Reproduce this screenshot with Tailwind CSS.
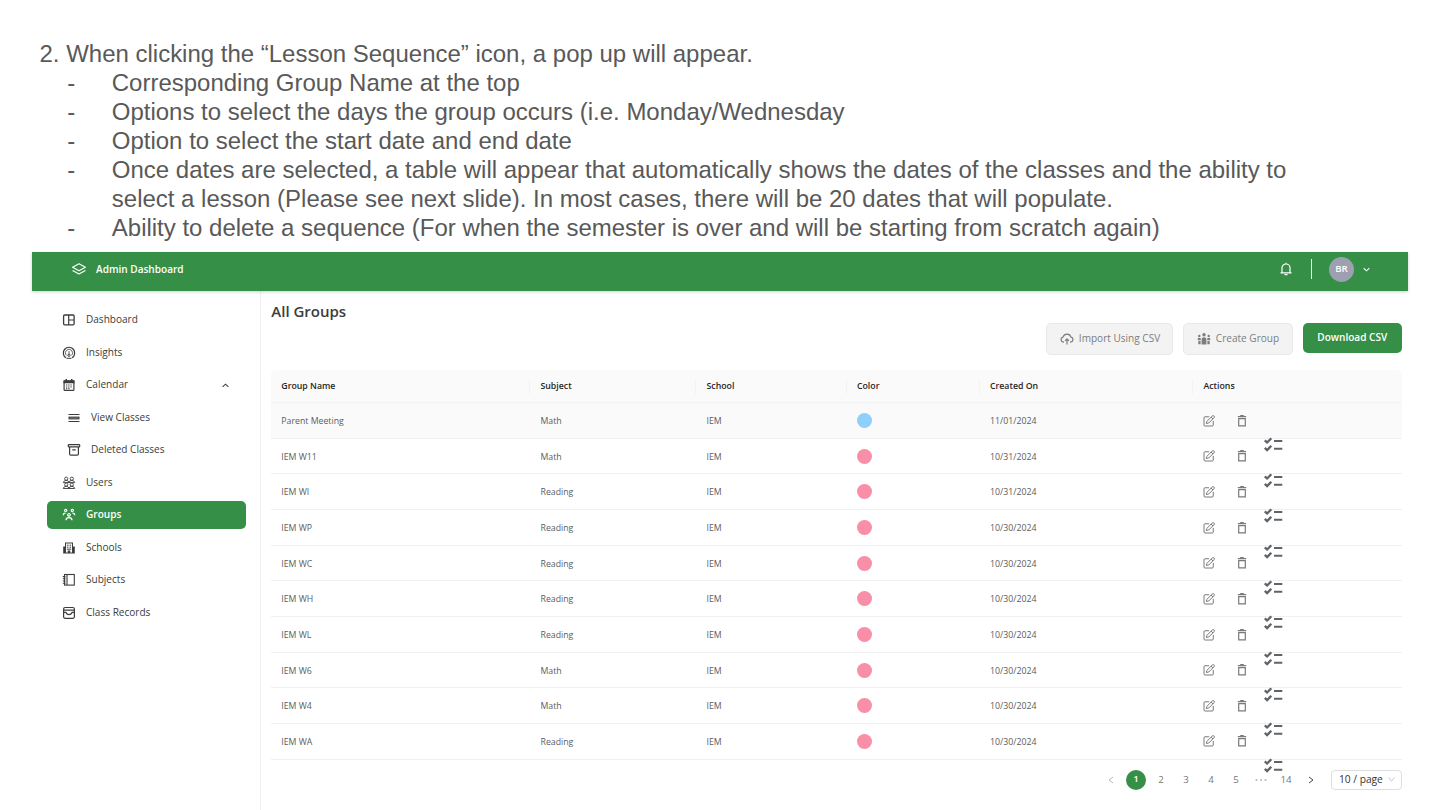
<!DOCTYPE html>
<html lang="en">
<head>
<meta charset="utf-8">
<title>All Groups</title>
<script src="https://cdn.jsdelivr.net/npm/@tailwindcss/browser@4"></script>
</head>
<body class="w-[1440px] h-[810px] overflow-hidden bg-white font-['Open_Sans',sans-serif] text-[#3c3c3c]">
<svg class="hidden">
  <symbol id="edit" viewBox="0 0 24 24"><g fill="none" stroke="currentColor" stroke-width="2" stroke-linejoin="round" stroke-linecap="round"><path d="M11.500 3.500H4a2 2 0 0 0-2 2v14.500a2 2 0 0 0 2 2h14.500a2 2 0 0 0 2-2v-7.500"/><path d="M8 12.500 18.500 2a2 2 0 0 1 3.500 3.500l-10.500 10.500-4 .8z"/><path d="m16.500 4.500 3 3"/></g></symbol>
  <symbol id="trash" viewBox="0 0 12 14"><path fill="none" stroke="currentColor" stroke-width="1.200" d="M1.800 2.600h8.400M4.200 1.700h3.600M2.700 4.600h6.600v7.200H2.700z"/></symbol>
  <symbol id="checks" viewBox="0 0 19 15"><g fill="none" stroke="#606368" stroke-width="2.300"><path d="m.8 3.300 2.300 2.200 4.200-4.300M.8 10.900l2.300 2.200 4.200-4.300"/><path stroke-width="1.900" d="M10 4h8.300M10 11.800h8.300"/></g></symbol>
</svg>
<div class="flex flex-col h-full pl-8 pr-8">
  <section class="h-[252px] shrink-0 pt-[40.450px] pl-[7.500px] font-['Liberation_Sans',sans-serif] text-[23.990px] leading-[28.850px] text-[#595959] whitespace-nowrap">
    <p>2. When clicking the “Lesson Sequence” icon, a pop up will appear.</p>
    <ul class="pl-[27.800px]">
      <li class="flex"><span class="w-[44.500px]">-</span><span>Corresponding Group Name at the top</span></li>
      <li class="flex"><span class="w-[44.500px]">-</span><span>Options to select the days the group occurs (i.e. Monday/Wednesday</span></li>
      <li class="flex"><span class="w-[44.500px]">-</span><span>Option to select the start date and end date</span></li>
      <li class="flex"><span class="w-[44.500px]">-</span><span>Once dates are selected, a table will appear that automatically shows the dates of the classes and the ability to<br>select a lesson (Please see next slide). In most cases, there will be 20 dates that will populate.</span></li>
      <li class="flex"><span class="w-[44.500px]">-</span><span>Ability to delete a sequence (For when the semester is over and will be starting from scratch again)</span></li>
    </ul>
  </section>

  <header class="relative z-10 flex h-[38.500px] shrink-0 items-center bg-[#368f46] pl-[40px] pr-[38px] pb-[4.500px] text-white shadow-[0_1px_3px_rgba(0,0,0,0.2)]">
    <svg class="mr-[10px] h-[14px] w-[14px]" viewBox="0 0 24 24" fill="none" stroke="currentColor" stroke-width="2" stroke-linejoin="round"><path d="M12 3 23 9 12 15 1 9z"/><path d="M1 14.500 12 20.500l11-6"/></svg>
    <span class="pt-px text-[10.050px] font-semibold">Admin Dashboard</span>
    <svg class="ml-auto h-[15px] w-[14px]" viewBox="0 0 14 15" fill="none" stroke="currentColor" stroke-width="1.200" stroke-linejoin="round"><path d="M1.500 10.800h11M3 10.500V6a4 4 0 0 1 8 0v4.500M7 2V.7M5.500 12.700h3"/></svg>
    <span class="ml-[18px] h-[20px] w-px bg-white/90"></span>
    <span class="ml-[17px] flex h-[25px] w-[25px] items-center justify-center rounded-full bg-[#9ca0b0] text-[9.700px] font-semibold">BR</span>
    <svg class="ml-[9px] h-[7px] w-[7px]" viewBox="0 0 8 8" fill="none" stroke="currentColor" stroke-width="1.200"><path d="m.7 2.500 3.300 3 3.300-3"/></svg>
  </header>

  <div class="flex min-h-0 grow">
    <nav class="w-[229px] shrink-0 border-r border-[#f0f0f0] pl-[15px] pr-[14.500px] pt-[15.500px] text-[10.050px]">
      <a class="mb-[5px] flex h-[27.500px] items-center pt-[0.500px] pl-[15px]"><svg class="mr-[10px] h-[14px] w-[14px]" viewBox="0 0 14 14" fill="none" stroke="currentColor" stroke-width="1.300"><rect x="1.600" y="2" width="10.500" height="9.800" rx="1"/><path d="M6.700 2v10M6.700 7h5.400" stroke-width="1.200"/></svg>Dashboard</a>
      <a class="mb-[5px] flex h-[27.500px] items-center pt-[0.500px] pl-[15px]"><svg class="mr-[10px] h-[14px] w-[14px]" viewBox="0 0 14 14" fill="none" stroke="currentColor"><path stroke-width="1.200" d="M4 11.800a5.700 5.700 0 1 1 6 0"/><path stroke-width=".8" d="M4.300 9.300a3.600 3.600 0 1 1 5.400 0M7 8V5"/><circle cx="7" cy="9.300" r="1.100"/><path d="M4.500 12.300h5"/></svg>Insights</a>
      <a class="mb-[5px] flex h-[27.500px] items-center pt-[0.500px] pl-[15px]"><svg class="mr-[10px] h-[14px] w-[14px]" viewBox="0 0 14 14"><path fill="currentColor" d="M1.500 2.300h2V1H5v1.300h4V1h1.500v1.300h2V5.300h-11z"/><rect x="2.100" y="3" width="9.800" height="9.300" rx=".5" fill="none" stroke="currentColor" stroke-width="1.200"/><path stroke="currentColor" stroke-dasharray="1.300 .9" d="M4 7h6.500M4 9h6.500M4 10.700h4"/></svg>Calendar
        <svg class="ml-auto mr-[17px] h-[7px] w-[7px]" viewBox="0 0 8 8" fill="none" stroke="currentColor" stroke-width="1.200"><path d="m.7 5.500 3.300-3 3.300 3"/></svg></a>
      <a class="mb-[5px] flex h-[27.500px] items-center pt-[0.500px] pl-[20px]"><svg class="mr-[10px] h-[14px] w-[14px]" viewBox="0 0 14 14" fill="none" stroke="currentColor"><path d="M1.500 3.500h11M1.500 10.500h11"/><path stroke-width="2.800" d="M1.500 7h11"/><path stroke="#999" stroke-width=".7" d="M2.500 7h9"/></svg>View Classes</a>
      <a class="mb-[5px] flex h-[27.500px] items-center pt-[0.500px] pl-[20px]"><svg class="mr-[10px] h-[14px] w-[14px]" viewBox="0 0 14 14" fill="none" stroke="currentColor" stroke-width="1.200"><rect x="1.300" y="1.600" width="11.400" height="2.300" rx=".6"/><path d="M2.600 4v7q0 1.200 1.200 1.200h6.400q1.200 0 1.200-1.200V4M5.300 6.800h3.400"/></svg>Deleted Classes</a>
      <a class="mb-[5px] flex h-[27.500px] items-center pt-[0.500px] pl-[15px]"><svg class="mr-[10px] h-[14px] w-[14px]" viewBox="0 0 14 14" fill="none" stroke="currentColor" stroke-width=".9"><circle cx="4.200" cy="2.700" r="1.600"/><circle cx="9.800" cy="2.700" r="1.600"/><path d="M1.300 6.600q.4-2.200 2.900-2.200T7 6.600q.4-2.200 2.800-2.200t2.900 2.200z"/><circle cx="4.200" cy="8.600" r="1.600"/><circle cx="9.800" cy="8.600" r="1.600"/><path d="M1.300 12.500q.4-2.200 2.900-2.200T7 12.500q.4-2.200 2.800-2.200t2.900 2.200z"/></svg>Users</a>
      <a class="mb-[5px] flex h-[27.500px] items-center rounded-[5px] bg-[#368f46] pt-[0.500px] pl-[15px] font-semibold text-white"><svg class="mr-[10px] h-[14px] w-[14px]" viewBox="0 0 14 14" fill="none" stroke="currentColor" stroke-width="1.200"><circle cx="3.700" cy="2.400" r="1.100"/><circle cx="10.300" cy="2.400" r="1.100"/><circle cx="7" cy="6.800" r="1.300"/><path d="M1.300 7.200q0-2.200 2.400-2.200M12.700 7.200q0-2.200-2.400-2.200M4 12.300q0-2.700 3-2.700t3 2.700"/></svg>Groups</a>
      <a class="mb-[5px] flex h-[27.500px] items-center pt-[0.500px] pl-[15px]"><svg class="mr-[10px] h-[14px] w-[14px]" viewBox="0 0 14 14"><path fill="currentColor" d="M1.200 12.500V5.500H3v-4h8v4h1.800v7z"/><path fill="#fff" d="M4 2.500h6v9H8.300V9.500H5.700v2H4z"/><path stroke="currentColor" d="M4.900 4.200h1.600M7.500 4.200h1.600M4.900 6.200h1.600M7.500 6.200h1.600M4.900 8.200h4.200"/></svg>Schools</a>
      <a class="mb-[5px] flex h-[27.500px] items-center pt-[0.500px] pl-[15px]"><svg class="mr-[10px] h-[14px] w-[14px]" viewBox="0 0 14 14" fill="none" stroke="currentColor" stroke-width="1.100"><rect x="2.500" y="1.500" width="9.800" height="10.600"/><path d="M5 1.500v10.600M.8 3.600h2.700M.8 5.800h2.700M.8 8h2.700M.8 10.200h2.700"/></svg>Subjects</a>
      <a class="mb-[5px] flex h-[27.500px] items-center pt-[0.500px] pl-[15px]"><svg class="mr-[10px] h-[14px] w-[14px]" viewBox="0 0 14 14" fill="none" stroke="currentColor" stroke-width="1.200"><rect x="1.600" y="1.500" width="10.800" height="10.800" rx="1.500"/><path d="M1.600 4.200h10.800M1.600 6.400h2.200Q5 8.700 7 8.700t3.200-2.300h2.200"/></svg>Class Records</a>
    </nav>

    <main class="grow pl-[10.300px] pr-[6px] pt-[10px]">
      <h1 class="h-[22px] text-[15px] leading-[21px] font-semibold">All Groups</h1>
      <div class="flex justify-end gap-[10px] text-[10.050px]">
        <button class="flex h-[32px] w-[127px] items-center justify-center gap-[5px] rounded-[5px] border border-[#e9e9e9] bg-[#f3f3f3] pl-[2px] text-[#7d7d7d]"><svg class="h-[14px] w-[14px]" viewBox="0 0 14 14" fill="none" stroke="currentColor" stroke-width="1.200"><path d="M4 10.200H3.500A2.600 2.600 0 0 1 3 5.100 4.200 4.200 0 0 1 11 5.100a2.600 2.600 0 0 1-.5 5.100H10M7 12.500V7M5 8.800l2-2 2 2"/></svg>Import Using CSV</button>
        <button class="flex h-[32px] w-[110px] items-center justify-center gap-[5px] rounded-[5px] border border-[#e9e9e9] bg-[#f3f3f3] pl-px text-[#7d7d7d]"><svg class="h-[14px] w-[14px]" viewBox="0 0 14 14" fill="currentColor"><circle cx="7" cy="2.800" r="1.700"/><circle cx="2.300" cy="3.900" r="1.200"/><circle cx="11.700" cy="3.900" r="1.200"/><path d="M4.600 12.500V7.500Q4.600 5.300 7 5.300t2.400 2.200v5zM.7 8V7q0-1.200 1.600-1.200 1.200 0 1.500.7V8zM13.300 8V7q0-1.200-1.600-1.200-1.200 0-1.500.7V8zM1.300 8.800h2.300v3.500H1.300zM10.400 8.800h2.300v3.500h-2.300z"/></svg>Create Group</button>
        <button class="flex h-[30.500px] w-[99.500px] items-center justify-center rounded-[5px] bg-[#368f46] font-semibold text-white">Download CSV</button>
      </div>

      <div class="mt-[15.500px] text-[8.750px] text-[#5c5c5c]">
        <div class="grid h-[33px] grid-cols-[259.200px_166px_150.500px_133px_213.500px_1fr] items-center rounded-t-[5px] border-b border-[#f3f3f3] bg-[#fafafa] font-semibold text-[#262626] [&>*]:flex [&>*]:h-[15px] [&>*]:items-center [&>*]:pt-[1.500px] [&>*]:pl-[10px] [&>*:not(:last-child)]:border-r [&>*:not(:last-child)]:border-[#f3f3f3]">
          <div>Group Name</div><div>Subject</div><div>School</div><div>Color</div><div>Created On</div><div>Actions</div>
        </div>
        <div id="rows"></div>
      </div>

      <div class="mt-[9px] flex h-[22px] items-center text-[9.700px] text-[#777]">
        <svg class="ml-auto mr-[12px] h-[8px] w-[6px]" viewBox="0 0 6 8" fill="none" stroke="#bbb"><path d="M5 1 1 4l4 3"/></svg>
        <span class="mr-[2.500px] flex h-[20px] w-[20px] items-center justify-center rounded-full bg-[#368f46] font-semibold text-white">1</span>
        <span class="w-[25px] pt-[1.200px] text-center">2</span><span class="w-[25px] pt-[1.200px] text-center">3</span><span class="w-[25px] pt-[1.200px] text-center">4</span><span class="w-[25px] pt-[1.200px] text-center">5</span>
        <svg class="ml-[6.500px] mr-[6.500px] h-[4px] w-[12px]" viewBox="0 0 12 4" fill="#bbb"><circle cx="1.500" cy="2" r="1.100"/><circle cx="6" cy="2" r="1.100"/><circle cx="10.500" cy="2" r="1.100"/></svg>
        <span class="w-[25px] pt-[1.200px] text-center">14</span>
        <svg class="ml-[9.500px] mr-[17px] h-[8px] w-[6px]" viewBox="0 0 6 8" fill="none" stroke="#444"><path d="m1 1 4 3-4 3"/></svg>
        <div class="flex h-[20px] w-[71px] items-center rounded-[4px] border border-[#dedede] pl-[7px] pr-[6px] text-[10.200px] text-[#333]"><span class="pt-px">10 / page</span><svg class="ml-auto h-[7px] w-[7px]" viewBox="0 0 8 8" fill="none" stroke="#c4c4c4"><path d="m.7 1.500 3.300 4.500 3.300-4.500"/></svg></div>
      </div>
    </main>
  </div>
</div>
<script>
const rows = [
  ["Parent Meeting","Math","11/01/2024"],["IEM W11","Math","10/31/2024"],["IEM WI","Reading","10/31/2024"],
  ["IEM WP","Reading","10/30/2024"],["IEM WC","Reading","10/30/2024"],["IEM WH","Reading","10/30/2024"],
  ["IEM WL","Reading","10/30/2024"],["IEM W6","Math","10/30/2024"],["IEM W4","Math","10/30/2024"],["IEM WA","Reading","10/30/2024"]
];
document.getElementById("rows").innerHTML = rows.map(([name, subject, date], i) => `
  <div class="relative grid h-[35.670px] grid-cols-[259.200px_166px_150.500px_133px_213.500px_1fr] items-center border-b border-[#f0f0f0] pt-[0.500px] [&>*]:pl-[10px] ${i ? "" : "bg-[#fafafa]"}">
    <div class="pt-[1.800px]">${name}</div><div class="pt-[1.800px]">${subject}</div><div class="pt-[1.800px]">IEM</div>
    <div><span class="block h-[15px] w-[15px] rounded-full ${i ? "bg-[#f88ea8]" : "bg-[#8fcffc]"}"></span></div>
    <div class="pt-[1.800px]">${date}</div>
    <div class="flex items-center gap-[21px] text-[#7a7a7a]"><svg class="h-[12px] w-[12px]"><use href="#edit"/></svg><svg class="h-[14px] w-[12px]"><use href="#trash"/></svg></div>
    <span class="absolute left-[982.700px] top-[34px] z-10"><svg class="h-[15px] w-[19px]"><use href="#checks"/></svg></span>
  </div>`).join("");
</script>
</body>
</html>
